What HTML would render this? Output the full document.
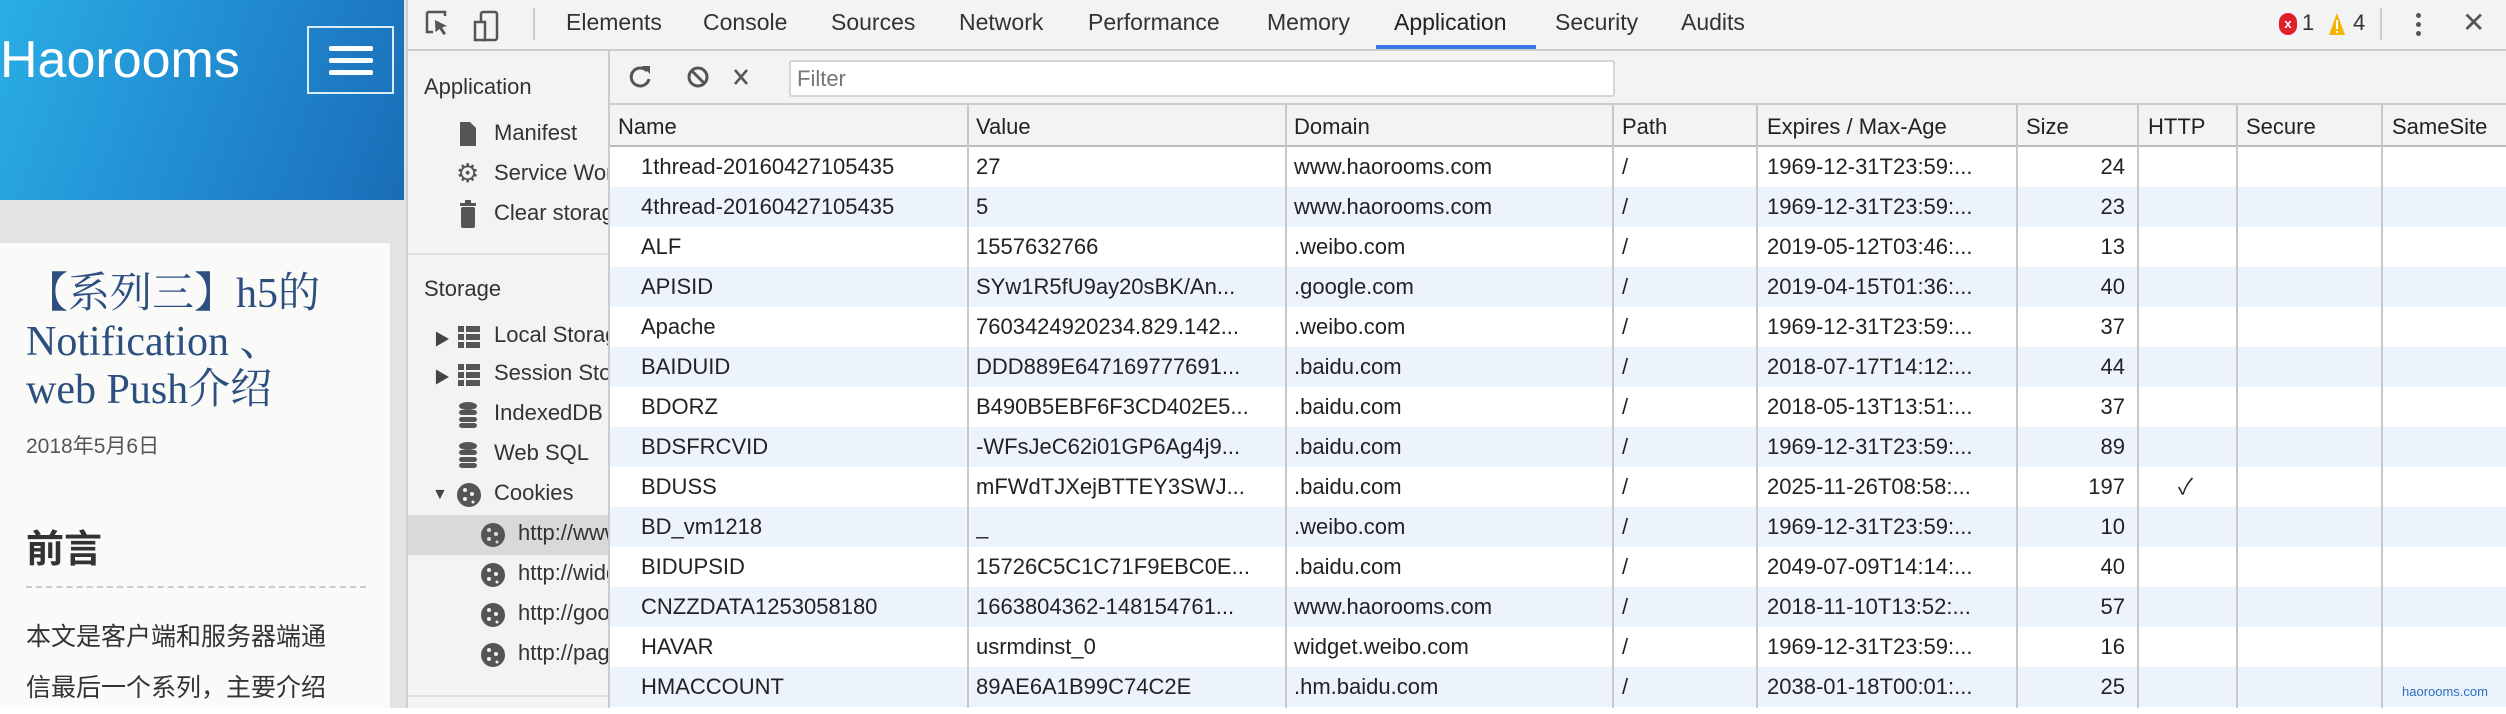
<!DOCTYPE html>
<html><head><meta charset="utf-8"><style>
*{margin:0;padding:0;box-sizing:border-box}
body{width:2506px;height:708px;overflow:hidden;position:relative;font-family:"Liberation Sans","Noto Sans CJK SC",sans-serif;background:#fff}
.a{position:absolute;white-space:nowrap}
#left{left:0;top:0;width:406px;height:708px;background:#e3e3e3}
#blue{left:0;top:0;width:404px;height:200px;background:linear-gradient(110deg,#2aaee4 0%,#2290d4 45%,#1a6db7 100%)}
#card{left:0;top:243px;width:390px;height:465px;background:#fafaf8}
#dt{left:406px;top:0;width:2100px;height:708px;background:#f3f3f3;border-left:2px solid #cfcfcf}
.tab{top:9px;font-size:23px;color:#333}
.side{font-size:22px;color:#333}
.hd{top:105px;height:42px;background:#f3f3f3;border-bottom:2px solid #bbb}
.row{left:610px;width:1896px;height:40px}
.cell{position:absolute;top:0;height:40px;line-height:40px;font-size:22px;color:#222;overflow:hidden;white-space:nowrap}
.vl{position:absolute;top:105px;width:2px;height:603px;background:#c8c8c8}
.hc{position:absolute;top:105px;height:42px;line-height:44px;font-size:22px;color:#222;white-space:nowrap}
</style></head><body>
<div class="a" id="left"></div>
<div class="a" id="blue"></div>
<div class="a" style="left:0;top:28px;font-size:52px;color:#fff;line-height:64px">Haorooms</div>
<div class="a" style="left:307px;top:26px;width:87px;height:68px;border:2px solid #d8ecf8"></div>
<div class="a" style="left:329px;top:46px;width:44px;height:5px;background:#fff;border-radius:2px"></div>
<div class="a" style="left:329px;top:58px;width:44px;height:5px;background:#fff;border-radius:2px"></div>
<div class="a" style="left:329px;top:70px;width:44px;height:5px;background:#fff;border-radius:2px"></div>
<div class="a" id="card"></div>
<div class="a" style="left:26px;top:270px;font-family:'Liberation Serif','Noto Serif CJK SC',serif;font-size:42px;line-height:48px;color:#2d4f80">【系列三】h5的<br>Notification 、<br>web Push介绍</div>
<div class="a" style="left:26px;top:430px;font-size:21px;color:#555">2018年5月6日</div>
<div class="a" style="left:26px;top:518px;font-size:38px;font-weight:bold;color:#333">前言</div>
<div class="a" style="left:26px;top:586px;width:340px;border-top:2px dashed #ccc"></div>
<div class="a" style="left:26px;top:612px;font-size:25px;line-height:51px;color:#333">本文是客户端和服务器端通<br>信最后一个系列，主要介绍</div>

<div class="a" id="dt"></div>
<div class="a" style="left:406px;top:49px;width:2100px;height:2px;background:#ccc"></div>
<svg class="a" style="left:425px;top:10px" width="100" height="32" viewBox="0 0 100 32"><path d="M2 2h18v4M2 2v20h6" fill="none" stroke="#555" stroke-width="2.5"/><path d="M10 10l12 6-5 1.5 4 6-2.5 1.5-4-6-4 3z" fill="#555"/><rect x="56" y="2" width="16" height="28" rx="2" fill="none" stroke="#555" stroke-width="2.5"/><rect x="50" y="12" width="10" height="18" fill="#f3f3f3" stroke="#555" stroke-width="2.5"/></svg>
<div class="a" style="left:533px;top:8px;width:2px;height:32px;background:#ccc"></div>
<div class="a tab" style="left:566px">Elements</div>
<div class="a tab" style="left:703px">Console</div>
<div class="a tab" style="left:831px">Sources</div>
<div class="a tab" style="left:959px">Network</div>
<div class="a tab" style="left:1088px">Performance</div>
<div class="a tab" style="left:1267px">Memory</div>
<div class="a tab" style="left:1394px;color:#222">Application</div>
<div class="a tab" style="left:1555px">Security</div>
<div class="a tab" style="left:1681px">Audits</div>
<div class="a" style="left:1376px;top:45px;width:160px;height:4px;background:#3a77e6"></div>
<div class="a" style="left:2279px;top:13px;width:18px;height:22px;border-radius:9px;background:#e0202a;color:#fff;font-size:13px;text-align:center;line-height:22px;font-weight:bold">x</div>
<div class="a" style="left:2302px;top:10px;font-size:22px;color:#333">1</div>
<svg class="a" style="left:2328px;top:12px" width="18" height="24"><path d="M9 1L17 23H1z" fill="#f4b400"/><rect x="8" y="8" width="2" height="9" fill="#fff"/><rect x="8" y="19" width="2" height="2" fill="#fff"/></svg>
<div class="a" style="left:2353px;top:10px;font-size:22px;color:#333">4</div>
<div class="a" style="left:2380px;top:8px;width:2px;height:32px;background:#ccc"></div>
<div class="a" style="left:2416px;top:13px;width:5px;height:5px;border-radius:3px;background:#555;box-shadow:0 9px 0 #555,0 18px 0 #555"></div>
<div class="a" style="left:2462px;top:6px;font-size:28px;color:#555">✕</div>

<div class="a" style="left:608px;top:51px;width:2px;height:657px;background:#ccc"></div>
<div class="a side" style="left:424px;top:74px">Application</div>
<svg class="a" style="left:460px;top:120px" width="16" height="26"><path d="M0 2h10l6 6v18H0z" fill="#555"/></svg>
<div class="a side" style="left:494px;top:120px">Manifest</div>
<div class="a" style="left:456px;top:158px;font-size:26px;color:#555">⚙</div>
<div class="a side" style="left:494px;top:160px;width:114px;overflow:hidden">Service Workers</div>
<svg class="a" style="left:460px;top:200px" width="16" height="28"><rect x="0" y="3" width="16" height="3" fill="#555"/><rect x="5" y="0" width="6" height="3" fill="#555"/><rect x="1" y="7" width="14" height="21" rx="2" fill="#555"/></svg>
<div class="a side" style="left:494px;top:200px;width:114px;overflow:hidden">Clear storage</div>
<div class="a" style="left:408px;top:253px;width:200px;height:2px;background:#e0e0e0"></div>
<div class="a side" style="left:424px;top:276px">Storage</div>
<div class="a" style="left:434px;top:326px;font-size:16px;color:#444">▶</div>
<div class="a" style="left:434px;top:364px;font-size:16px;color:#444">▶</div>
<div class="a" style="left:432px;top:486px;font-size:16px;color:#444">▼</div>
<svg class="a" style="left:458px;top:326px" width="22" height="22"><g fill="#555"><rect x="0" y="0" width="6" height="6"/><rect x="8" y="0" width="14" height="6"/><rect x="0" y="8" width="6" height="6"/><rect x="8" y="8" width="14" height="6"/><rect x="0" y="16" width="6" height="6"/><rect x="8" y="16" width="14" height="6"/></g></svg>
<div class="a side" style="left:494px;top:322px;width:114px;overflow:hidden">Local Storage</div>
<svg class="a" style="left:458px;top:364px" width="22" height="22"><g fill="#555"><rect x="0" y="0" width="6" height="6"/><rect x="8" y="0" width="14" height="6"/><rect x="0" y="8" width="6" height="6"/><rect x="8" y="8" width="14" height="6"/><rect x="0" y="16" width="6" height="6"/><rect x="8" y="16" width="14" height="6"/></g></svg>
<div class="a side" style="left:494px;top:360px;width:114px;overflow:hidden">Session Storage</div>
<svg class="a" style="left:459px;top:402px" width="18" height="26"><g fill="#555"><ellipse cx="9" cy="4" rx="9" ry="4"/><rect x="0" y="8" width="18" height="5" rx="3"/><rect x="0" y="15" width="18" height="5" rx="3"/><rect x="0" y="21" width="18" height="5" rx="3"/></g></svg>
<div class="a side" style="left:494px;top:400px;width:114px;overflow:hidden">IndexedDB</div>
<svg class="a" style="left:459px;top:442px" width="18" height="26"><g fill="#555"><ellipse cx="9" cy="4" rx="9" ry="4"/><rect x="0" y="8" width="18" height="5" rx="3"/><rect x="0" y="15" width="18" height="5" rx="3"/><rect x="0" y="21" width="18" height="5" rx="3"/></g></svg>
<div class="a side" style="left:494px;top:440px">Web SQL</div>
<div class="a" style="left:408px;top:515px;width:200px;height:40px;background:#d9d9d9"></div>
<svg class="a" style="left:456px;top:482px" width="26" height="26"><circle cx="13" cy="13" r="12" fill="#555"/><g fill="#f3f3f3"><circle cx="9" cy="8" r="2"/><circle cx="16" cy="12" r="2"/><circle cx="9" cy="17" r="2"/><circle cx="17" cy="20" r="1.5"/></g></svg>
<div class="a side" style="left:494px;top:480px">Cookies</div>
<svg class="a" style="left:480px;top:522px" width="26" height="26"><circle cx="13" cy="13" r="12" fill="#555"/><g fill="#d9d9d9"><circle cx="9" cy="8" r="2"/><circle cx="16" cy="12" r="2"/><circle cx="9" cy="17" r="2"/><circle cx="17" cy="20" r="1.5"/></g></svg>
<div class="a side" style="left:518px;top:520px;width:90px;overflow:hidden">http://www.haorooms.com</div>
<svg class="a" style="left:480px;top:562px" width="26" height="26"><circle cx="13" cy="13" r="12" fill="#555"/><g fill="#f3f3f3"><circle cx="9" cy="8" r="2"/><circle cx="16" cy="12" r="2"/><circle cx="9" cy="17" r="2"/><circle cx="17" cy="20" r="1.5"/></g></svg>
<div class="a side" style="left:518px;top:560px;width:90px;overflow:hidden">http://widget.weibo.com</div>
<svg class="a" style="left:480px;top:602px" width="26" height="26"><circle cx="13" cy="13" r="12" fill="#555"/><g fill="#f3f3f3"><circle cx="9" cy="8" r="2"/><circle cx="16" cy="12" r="2"/><circle cx="9" cy="17" r="2"/><circle cx="17" cy="20" r="1.5"/></g></svg>
<div class="a side" style="left:518px;top:600px;width:90px;overflow:hidden">http://googleads</div>
<svg class="a" style="left:480px;top:642px" width="26" height="26"><circle cx="13" cy="13" r="12" fill="#555"/><g fill="#f3f3f3"><circle cx="9" cy="8" r="2"/><circle cx="16" cy="12" r="2"/><circle cx="9" cy="17" r="2"/><circle cx="17" cy="20" r="1.5"/></g></svg>
<div class="a side" style="left:518px;top:640px;width:90px;overflow:hidden">http://pagead</div>
<div class="a" style="left:408px;top:695px;width:200px;height:2px;background:#e0e0e0"></div>

<div class="a" style="left:610px;top:103px;width:1896px;height:2px;background:#ccc"></div>
<svg class="a" style="left:628px;top:63px" width="120" height="28"><path d="M19 8A9 9 0 1 0 21 16" fill="none" stroke="#555" stroke-width="3"/><path d="M14 3h8v8z" fill="#555"/><circle cx="70" cy="14" r="9" fill="none" stroke="#555" stroke-width="3"/><path d="M64 8l12 12" stroke="#555" stroke-width="3"/><path d="M107 7l12 14M119 7l-12 14" stroke="#555" stroke-width="2.5"/></svg>
<div class="a" style="left:789px;top:60px;width:826px;height:37px;background:#fff;border:2px solid #d6d6d6;border-radius:3px;font-size:22px;color:#777;padding:4px 6px">Filter</div>

<div class="a" style="left:610px;top:147px;width:1896px;height:561px;background:#fff"></div>
<div class="a hd" style="left:610px;width:1896px"></div>
<div class="hc" style="left:618px">Name</div>
<div class="hc" style="left:976px">Value</div>
<div class="hc" style="left:1294px">Domain</div>
<div class="hc" style="left:1622px">Path</div>
<div class="hc" style="left:1767px">Expires / Max-Age</div>
<div class="hc" style="left:2026px">Size</div>
<div class="hc" style="left:2148px">HTTP</div>
<div class="hc" style="left:2246px">Secure</div>
<div class="hc" style="left:2392px">SameSite</div>
<div id="rows"></div>
<script>
var d=[["1thread-20160427105435","27","www.haorooms.com","1969-12-31T23:59:...","24",""],
["4thread-20160427105435","5","www.haorooms.com","1969-12-31T23:59:...","23",""],
["ALF","1557632766",".weibo.com","2019-05-12T03:46:...","13",""],
["APISID","SYw1R5fU9ay20sBK/An...",".google.com","2019-04-15T01:36:...","40",""],
["Apache","7603424920234.829.142...",".weibo.com","1969-12-31T23:59:...","37",""],
["BAIDUID","DDD889E647169777691...",".baidu.com","2018-07-17T14:12:...","44",""],
["BDORZ","B490B5EBF6F3CD402E5...",".baidu.com","2018-05-13T13:51:...","37",""],
["BDSFRCVID","-WFsJeC62i01GP6Ag4j9...",".baidu.com","1969-12-31T23:59:...","89",""],
["BDUSS","mFWdTJXejBTTEY3SWJ...",".baidu.com","2025-11-26T08:58:...","197","✓"],
["BD_vm1218","_",".weibo.com","1969-12-31T23:59:...","10",""],
["BIDUPSID","15726C5C1C71F9EBC0E...",".baidu.com","2049-07-09T14:14:...","40",""],
["CNZZDATA1253058180","1663804362-148154761...","www.haorooms.com","2018-11-10T13:52:...","57",""],
["HAVAR","usrmdinst_0","widget.weibo.com","1969-12-31T23:59:...","16",""],
["HMACCOUNT","89AE6A1B99C74C2E",".hm.baidu.com","2038-01-18T00:01:...","25",""]];
var h="";
d.forEach(function(r,i){
h+='<div class="a row" style="top:'+(147+i*40)+'px;background:'+(i%2?'#edf3fc':'#fff')+'">'+
'<div class="cell" style="left:31px;width:340px">'+r[0]+'</div>'+
'<div class="cell" style="left:366px;width:300px">'+r[1]+'</div>'+
'<div class="cell" style="left:684px">'+r[2]+'</div>'+
'<div class="cell" style="left:1012px">/</div>'+
'<div class="cell" style="left:1157px;width:245px">'+r[3]+'</div>'+
'<div class="cell" style="left:1410px;width:105px;text-align:right">'+r[4]+'</div>'+
'<div class="cell" style="left:1568px">'+r[5]+'</div></div>';});
[967,1285,1612,1756,2016,2137,2236,2381].forEach(function(x){h+='<div class="vl" style="left:'+x+'px"></div>';});
document.getElementById("rows").innerHTML=h;
</script>
<div class="a" style="left:2402px;top:684px;font-size:13px;color:#2a6fc0">haorooms.com</div>
</body></html>
